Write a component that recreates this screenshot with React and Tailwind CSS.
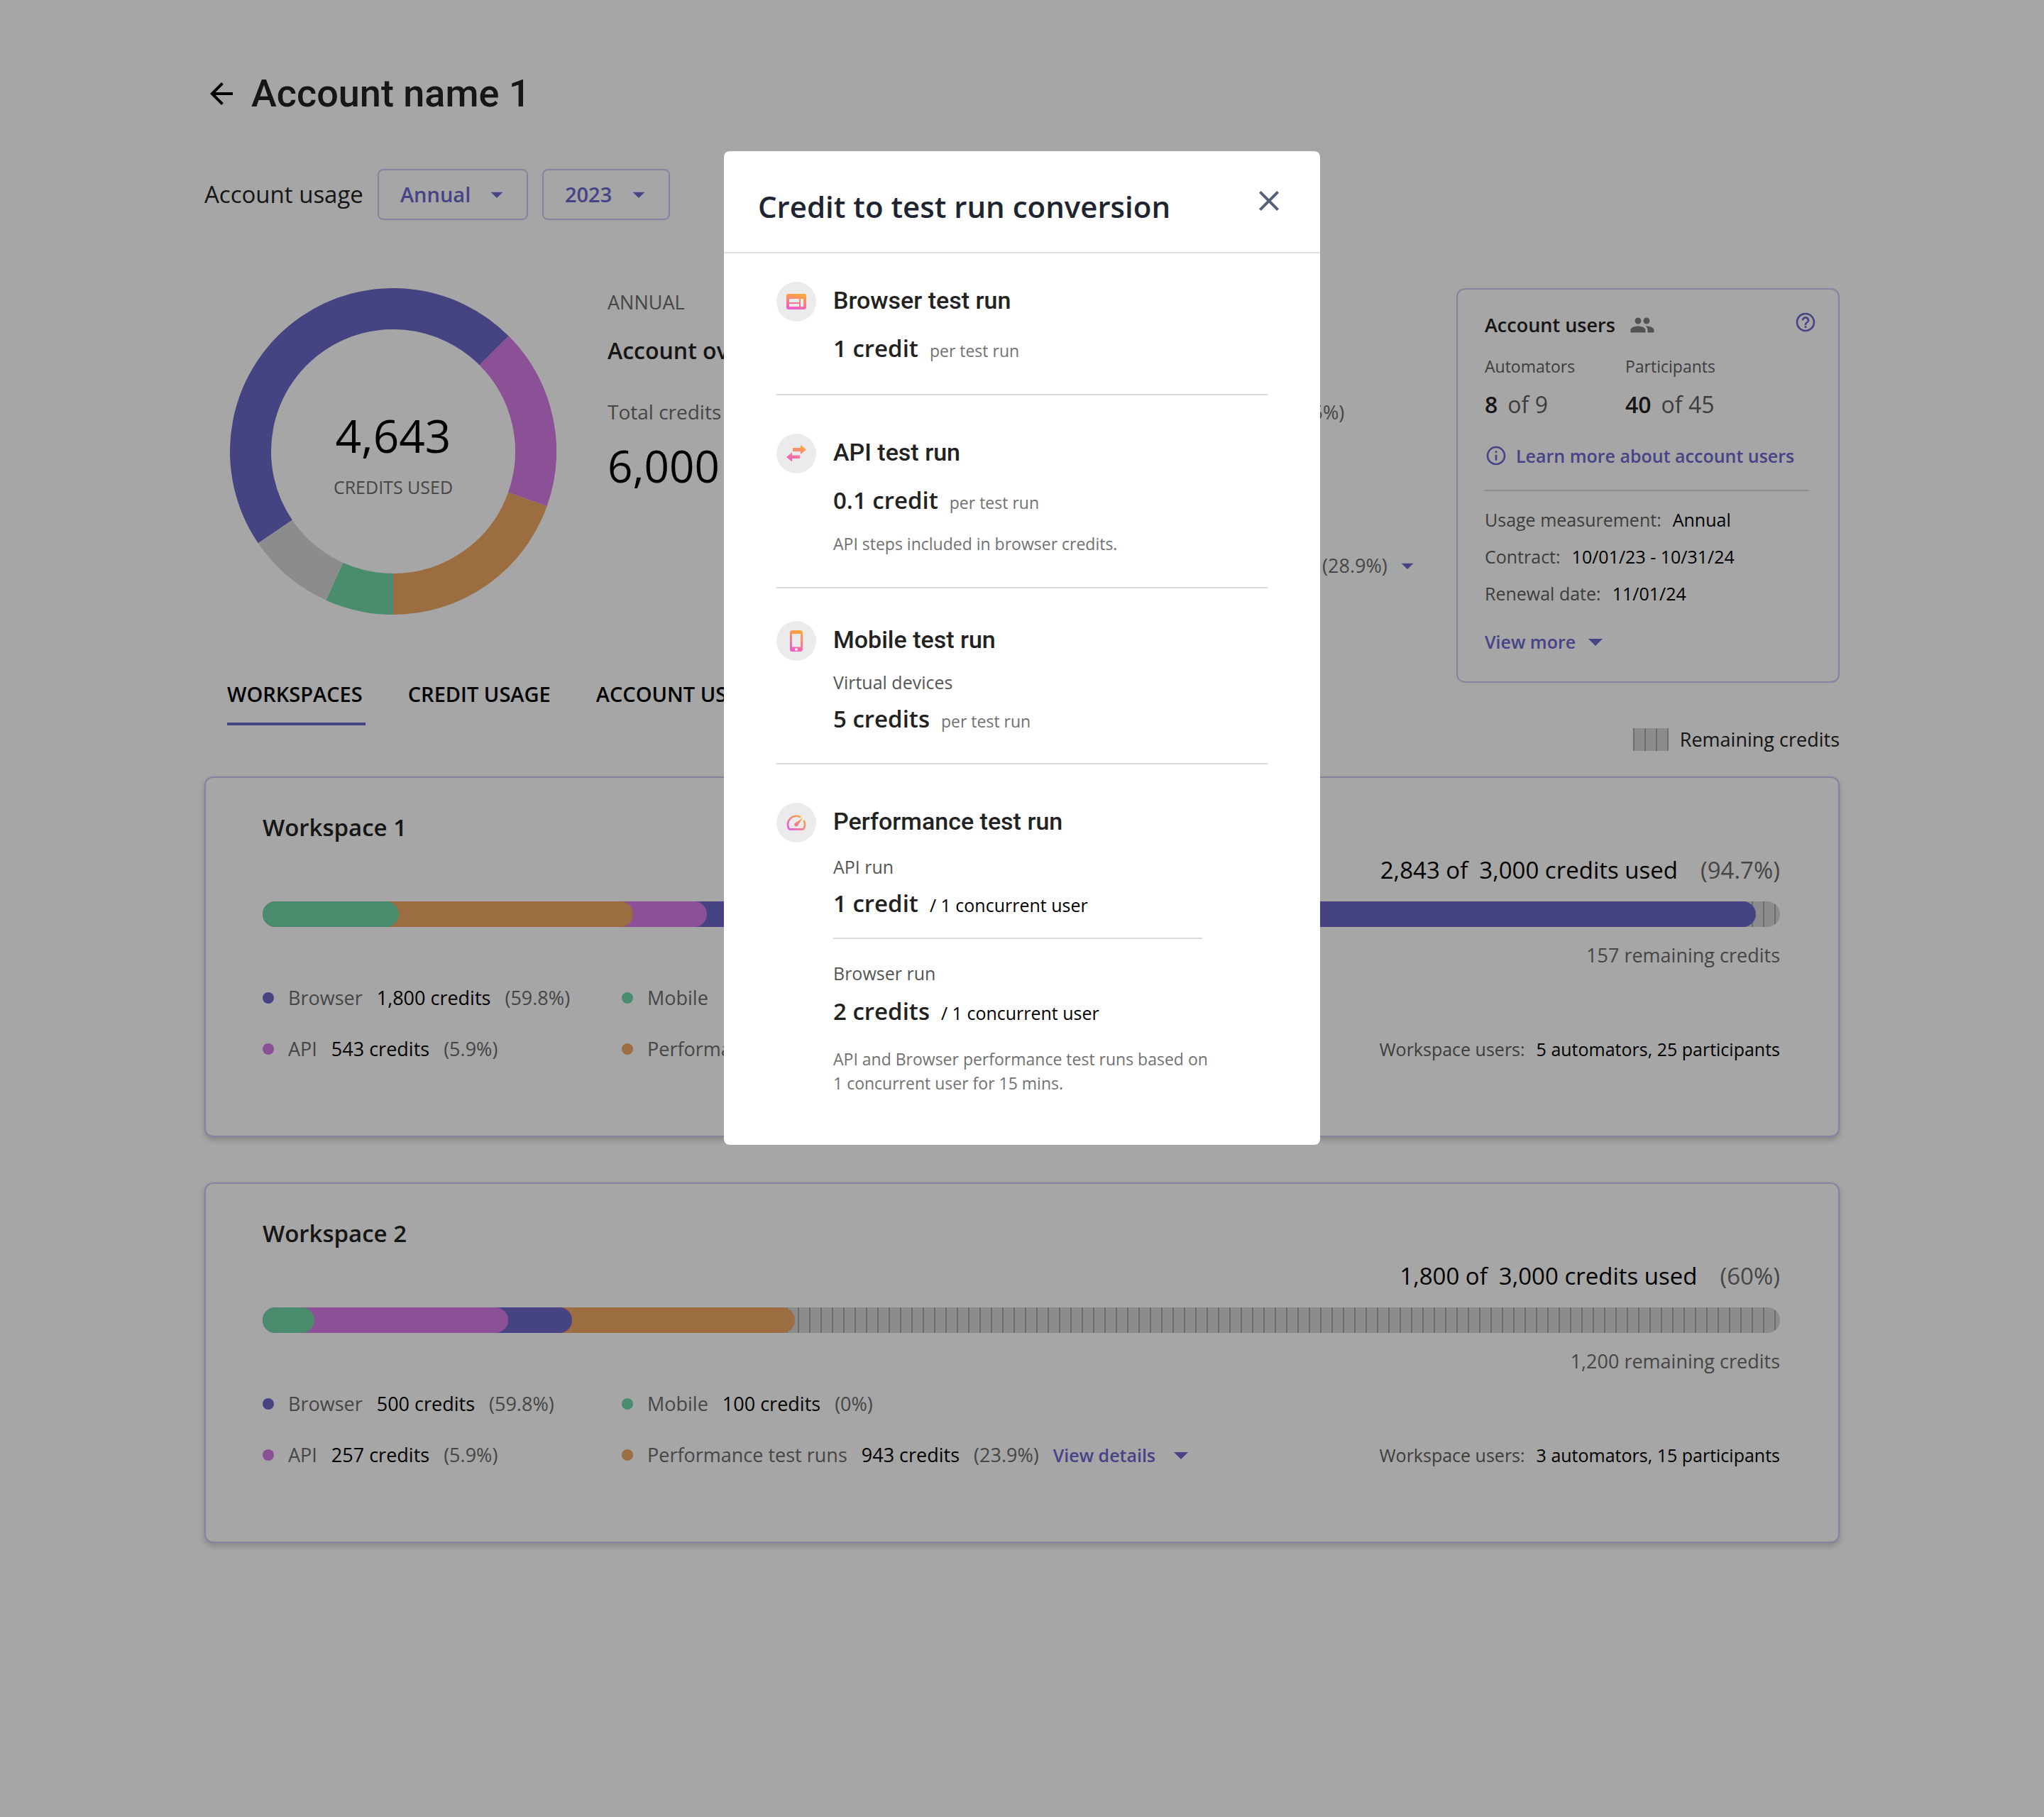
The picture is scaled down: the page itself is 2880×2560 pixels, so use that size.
import React from 'react';
import {
  MdArrowBack,
  MdArrowDropDown,
  MdClose,
  MdHelpOutline,
  MdOutlineInfo,
  MdPeople,
} from 'react-icons/md';

const STRIPES =
  'bg-[repeating-linear-gradient(to_left,#d7d7d7_0px,#d7d7d7_6px,#a9a9a9_6px,#a9a9a9_8px,#d7d7d7_8px,#d7d7d7_16px)]';

const FILL = {
  browser: 'bg-[#6c67c8]',
  api: 'bg-[#d77be7]',
  performance: 'bg-[#eea864]',
  mobile: 'bg-[#72d7a9]',
  remaining: 'bg-[#d7d7d7]',
};

const DONUT = [
  { color: '#6c67c8', from: 235.8, to: 405 },
  { color: '#d77be7', from: 45, to: 109.6 },
  { color: '#eea864', from: 109.6, to: 180 },
  { color: '#72d7a9', from: 180, to: 204.3 },
  { color: '#d7d7d7', from: 204.3, to: 235.8 },
];

const WORKSPACES = [
  {
    name: 'Workspace 1',
    used: '2,843 of',
    total: '3,000 credits used',
    percent: '(94.7%)',
    remaining: '157 remaining credits',
    users: '5 automators, 25 participants',
    segments: [
      { kind: 'browser', end: 98.4 },
      { kind: 'api', end: 29.3 },
      { kind: 'performance', end: 24.4 },
      { kind: 'mobile', end: 9 },
    ],
    browser: ['1,800 credits', '(59.8%)'],
    mobile: ['100 credits', '(0%)'],
    api: ['543 credits', '(5.9%)'],
    performance: ['943 credits', '(23.9%)'],
  },
  {
    name: 'Workspace 2',
    used: '1,800 of',
    total: '3,000 credits used',
    percent: '(60%)',
    remaining: '1,200 remaining credits',
    users: '3 automators, 15 participants',
    segments: [
      { kind: 'performance', end: 35.1 },
      { kind: 'browser', end: 20.4 },
      { kind: 'api', end: 16.2 },
      { kind: 'mobile', end: 3.4 },
    ],
    browser: ['500 credits', '(59.8%)'],
    mobile: ['100 credits', '(0%)'],
    api: ['257 credits', '(5.9%)'],
    performance: ['943 credits', '(23.9%)'],
  },
];

function Dropdown({ label, options, width }) {
  return (
    <div className={`relative ${width}`}>
      <select
        aria-label={label}
        className="h-18 w-full appearance-none rounded-lg border-2 border-[#d0caf4] bg-white pl-[30px] text-[29px] font-semibold text-[#6c67d0]"
      >
        {options.map((o) => (
          <option key={o}>{o}</option>
        ))}
      </select>
      <MdArrowDropDown
        size={40}
        className="pointer-events-none absolute top-4 right-6 text-[#6c67d0]"
      />
    </div>
  );
}

function Donut() {
  return (
    <div className="grid size-[460px] shrink-0 place-items-center">
      <svg viewBox="0 0 460 460" className="size-full [grid-area:1/1]" aria-hidden="true">
        {DONUT.map((s) => (
          <circle
            key={s.color}
            cx="230"
            cy="230"
            r="201"
            fill="none"
            stroke={s.color}
            strokeWidth="58"
            pathLength="360"
            strokeDasharray={`${s.to - s.from} 360`}
            transform={`rotate(${s.from - 90} 230 230)`}
          />
        ))}
      </svg>
      <div className="flex flex-col items-center gap-2 pt-5 [grid-area:1/1]">
        <span className="text-[64px] leading-[72px]">4,643</span>
        <span className="text-[25px] leading-[56px] text-[#6c6c6c]">CREDITS USED</span>
      </div>
    </div>
  );
}

function LegendItem({ kind, label, credits, percent, children }) {
  return (
    <li className="flex items-center gap-5 whitespace-nowrap text-[27px] leading-9">
      <span className={`size-4 rounded-full ${FILL[kind]}`} />
      <span className="text-[#6c6c6c]">{label}</span>
      <span>{credits}</span>
      <span className="text-[#6c6c6c]">{percent}</span>
      {children}
    </li>
  );
}

function LinkButton({ gap, children }) {
  return (
    <button
      type="button"
      className={`flex items-center text-[25px] leading-9 font-semibold text-[#6c67d0] ${gap}`}
    >
      {children}
      <MdArrowDropDown size={48} className="-my-2" />
    </button>
  );
}

function Fact({ label, value }) {
  return (
    <div className="flex gap-4">
      <dt className="text-[#5f5f5f]">{label}</dt>
      <dd>{value}</dd>
    </div>
  );
}

function AccountUsers() {
  return (
    <aside className="w-[540px] shrink-0 rounded-xl border-2 border-[#d0caf4] bg-white pt-8 pr-[42px] pb-[38px] pl-[38px]">
      <div className="flex items-center gap-5">
        <h2 className="text-[27px] leading-9 font-semibold text-[#222222]">Account users</h2>
        <MdPeople size={36} className="text-[#808080]" />
        <button type="button" aria-label="Help" className="-mt-2 -mr-3 ml-auto text-[#6c67d0]">
          <MdHelpOutline size={32} />
        </button>
      </div>
      <dl className="mt-6 flex">
        <div className="w-[198px]">
          <dt className="text-[23px] leading-8 text-[#5f5f5f]">Automators</dt>
          <dd className="mt-4 text-[32px] leading-11 text-[#5f5f5f]">
            <strong className="mr-3.5 font-semibold text-[#222222]">8</strong>of 9
          </dd>
        </div>
        <div>
          <dt className="text-[23px] leading-8 text-[#5f5f5f]">Participants</dt>
          <dd className="mt-4 text-[32px] leading-11 text-[#5f5f5f]">
            <strong className="mr-3.5 font-semibold text-[#222222]">40</strong>of 45
          </dd>
        </div>
      </dl>
      <a
        href="#account-users"
        className="mt-8 flex items-center gap-3 text-[25px] leading-9 font-semibold whitespace-nowrap text-[#6c67d0]"
      >
        <MdOutlineInfo size={32} />
        Learn more about account users
      </a>
      <hr className="mt-[30px] border-t-2 border-[#d7d7d7]" />
      <dl className="mt-[14px] mb-6 text-[25px] leading-[52px]">
        <Fact label="Usage measurement:" value="Annual" />
        <Fact label="Contract:" value="10/01/23 - 10/31/24" />
        <Fact label="Renewal date:" value="11/01/24" />
      </dl>
      <LinkButton gap="gap-1">View more</LinkButton>
    </aside>
  );
}

function UsageBar({ segments }) {
  return (
    <div className={`mt-[22px] grid h-9 overflow-hidden rounded-full ${STRIPES}`}>
      {segments.map((s) => (
        <div
          key={s.kind}
          className={`rounded-full [grid-area:1/1] ${FILL[s.kind]}`}
          style={{ width: `${s.end}%` }}
        />
      ))}
    </div>
  );
}

function WorkspaceCard({ data }) {
  return (
    <section className="rounded-xl border-2 border-[#d0caf4] bg-white pt-12 pr-[82px] pb-[104px] pl-20 shadow-[0_4px_8px_rgba(0,0,0,0.2)]">
      <h2 className="text-[33px] leading-11 font-semibold text-[#222222]">{data.name}</h2>
      <p className="mt-4 flex justify-end text-[33px] leading-11">
        <span className="mr-4">{data.used}</span>
        <span className="mr-8">{data.total}</span>
        <span className="text-[#6c6c6c]">{data.percent}</span>
      </p>
      <UsageBar segments={data.segments} />
      <p className="mt-[22px] text-right text-[27px] leading-9 text-[#6c6c6c]">{data.remaining}</p>
      <div className="mt-6 flex items-end justify-between">
        <ul className="grid grid-cols-[506px_auto] gap-y-9">
          <LegendItem kind="browser" label="Browser" credits={data.browser[0]} percent={data.browser[1]} />
          <LegendItem kind="mobile" label="Mobile" credits={data.mobile[0]} percent={data.mobile[1]} />
          <LegendItem kind="api" label="API" credits={data.api[0]} percent={data.api[1]} />
          <LegendItem
            kind="performance"
            label="Performance test runs"
            credits={data.performance[0]}
            percent={data.performance[1]}
          >
            <LinkButton gap="gap-3">View details</LinkButton>
          </LegendItem>
        </ul>
        <p className="flex gap-4 text-[25px] leading-9">
          <span className="text-[#5f5f5f]">Workspace users:</span>
          <span>{data.users}</span>
        </p>
      </div>
    </section>
  );
}

function WarmGradient({ id, horizontal }) {
  return (
    <linearGradient
      id={id}
      x1={horizontal ? '0' : '0.35'}
      y1={horizontal ? '0.9' : '1'}
      x2={horizontal ? '0.8' : '0.65'}
      y2={horizontal ? '0.1' : '0'}
    >
      <stop offset="0" stopColor={horizontal ? '#e552e6' : '#f05bc9'} />
      <stop offset="1" stopColor="#fea83a" />
    </linearGradient>
  );
}

function BrowserIcon() {
  return (
    <svg width="28" height="22" viewBox="0 0 28 22">
      <defs>
        <WarmGradient id="browser-fill" />
      </defs>
      <path
        fill="url(#browser-fill)"
        fillRule="evenodd"
        d="M3 0h22a3 3 0 0 1 3 3v16a3 3 0 0 1-3 3H3a3 3 0 0 1-3-3V3a3 3 0 0 1 3-3ZM4 7v5h14V7ZM4 14v4h14v-4ZM20 7v11h4V7Z"
      />
    </svg>
  );
}

function ApiIcon() {
  return (
    <svg width="28" height="24" viewBox="0 0 28 24">
      <defs>
        <WarmGradient id="api-fill" />
      </defs>
      <path
        fill="url(#api-fill)"
        d="M9 4h11V0l8 6.500L20 13V9H9ZM19 19H8v4.500L0 17l8-6.500V14.500h11Z"
      />
    </svg>
  );
}

function MobileIcon() {
  return (
    <svg width="18" height="30" viewBox="0 0 18 30">
      <defs>
        <WarmGradient id="mobile-fill" />
      </defs>
      <path
        fill="url(#mobile-fill)"
        fillRule="evenodd"
        d="M3.500 0h11A3.500 3.500 0 0 1 18 3.500v23a3.500 3.500 0 0 1-3.500 3.500h-11A3.500 3.500 0 0 1 0 26.500v-23A3.500 3.500 0 0 1 3.500 0ZM3 5v18.500h12V5ZM9 25a2 2 0 1 0 0 4a2 2 0 1 0 0-4Z"
      />
    </svg>
  );
}

function SpeedIcon() {
  return (
    <svg width="32" height="32" viewBox="0 0 24 24">
      <defs>
        <WarmGradient id="speed-fill" horizontal />
      </defs>
      <path
        fill="url(#speed-fill)"
        d="m20.380 8.570-1.230 1.850a8 8 0 0 1-.22 7.580H5.070A8 8 0 0 1 15.580 6.850l1.850-1.230A10 10 0 0 0 3.350 19a2 2 0 0 0 1.720 1h13.850a2 2 0 0 0 1.740-1 10 10 0 0 0-.27-10.440zm-9.790 6.840a2 2 0 0 0 2.830 0l5.660-8.490-8.490 5.660a2 2 0 0 0 0 2.830z"
      />
    </svg>
  );
}

function RunSection({ icon, title, className, children }) {
  return (
    <section className={`flex gap-6 ${className}`}>
      <div className="grid size-14 shrink-0 place-items-center rounded-full bg-[#ebebeb]">{icon}</div>
      <div>
        <h3 className="font-[Roboto,sans-serif] text-[34px] leading-[52px] font-medium text-[#222222]">
          {title}
        </h3>
        {children}
      </div>
    </section>
  );
}

function Price({ amount, unit, strong, className }) {
  return (
    <p className={`flex items-baseline gap-4 leading-12 ${className}`}>
      <span className="text-[33px] font-semibold text-[#222222]">{amount}</span>
      <span className={strong ? 'text-[25px] leading-8' : 'text-[23px] leading-8 text-[#717171]'}>
        {unit}
      </span>
    </p>
  );
}

function ConversionDialog() {
  return (
    <div className="fixed inset-0 flex items-start justify-center bg-black/35 pt-[213px]">
      <div
        role="dialog"
        aria-modal="true"
        aria-labelledby="conversion-title"
        className="w-full max-w-[840px] rounded-lg bg-white"
      >
        <header className="flex items-start justify-between border-b-2 border-[#e3e3e3] px-12 pt-[46px] pb-8">
          <h2 id="conversion-title" className="text-[42px] leading-16 font-semibold text-[#1e2530]">
            Credit to test run conversion
          </h2>
          <button type="button" aria-label="Close" className="text-[#53617a]">
            <MdClose size={48} />
          </button>
        </header>
        <div className="px-[74px] pt-10 pb-[70px]">
          <RunSection icon={<BrowserIcon />} title="Browser test run" className="pb-10">
            <Price amount="1 credit" unit="per test run" className="mt-[18px]" />
          </RunSection>
          <RunSection
            icon={<ApiIcon />}
            title="API test run"
            className="border-t-2 border-[#dcdcdc] pt-[54px] pb-11"
          >
            <Price amount="0.1 credit" unit="per test run" className="mt-[18px]" />
            <p className="mt-5 text-[23px] leading-[34px] text-[#717171]">
              API steps included in browser credits.
            </p>
          </RunSection>
          <RunSection
            icon={<MobileIcon />}
            title="Mobile test run"
            className="border-t-2 border-[#dcdcdc] pt-[46px] pb-[38px]"
          >
            <p className="mt-[18px] text-[25px] leading-8 text-[#555555]">Virtual devices</p>
            <Price amount="5 credits" unit="per test run" className="mt-3" />
          </RunSection>
          <RunSection
            icon={<SpeedIcon />}
            title="Performance test run"
            className="border-t-2 border-[#dcdcdc] pt-[54px]"
          >
            <p className="mt-[22px] text-[25px] leading-8 text-[#555555]">API run</p>
            <Price amount="1 credit" unit="/ 1 concurrent user" strong className="mt-3" />
            <hr className="mt-6 w-[520px] border-t-2 border-[#dcdcdc]" />
            <p className="mt-8 text-[25px] leading-8 text-[#555555]">Browser run</p>
            <Price amount="2 credits" unit="/ 1 concurrent user" strong className="mt-[14px]" />
            <p className="mt-[26px] text-[23px] leading-[34px] text-[#717171]">
              API and Browser performance test runs based on
              <br />1 concurrent user for 15 mins.
            </p>
          </RunSection>
        </div>
      </div>
    </div>
  );
}

export default function App() {
  return (
    <div className="min-h-screen bg-white font-['Open_Sans',sans-serif] text-black">
      <main className="px-[10%] pt-25 pb-24">
        <header className="flex items-center gap-[18px]">
          <button type="button" aria-label="Back">
            <MdArrowBack size={48} />
          </button>
          <h1 className="font-[Roboto,sans-serif] text-[54px] leading-16 font-medium text-[#222222]">
            Account name 1
          </h1>
        </header>

        <div className="mt-[74px] flex items-center gap-5">
          <span className="text-[33px] text-[#222222]">Account usage</span>
          <Dropdown label="Period" options={['Annual', 'Monthly']} width="w-[212px]" />
          <Dropdown label="Year" options={['2023', '2022']} width="w-[180px]" />
        </div>

        <div className="mt-24 flex">
          <div className="ml-9">
            <Donut />
          </div>
          <div className="ml-18 w-[511px] shrink-0 whitespace-nowrap">
            <p className="text-[27px] leading-10 text-[#6c6c6c]">ANNUAL</p>
            <h2 className="mt-[26px] text-[32px] leading-11 font-semibold text-[#222222]">Account overview</h2>
            <p className="mt-11 text-[28px] leading-10 text-[#6c6c6c]">Total credits purchased</p>
            <p className="mt-4 text-[62px] leading-20">6,000</p>
          </div>
          <ul className="mt-[157px] flex flex-1 flex-col gap-9">
            <LegendItem kind="remaining" label="Unspent credits" credits="1,357 credits" percent="(22.5%)" />
            <LegendItem kind="browser" label="Browser" credits="2,300 credits" percent="(38.3%)" />
            <LegendItem kind="api" label="API" credits="800 credits" percent="(13.3%)" />
            <LegendItem kind="performance" label="Performance test runs" credits="943 credits" percent="(28.9%)">
              <button type="button" aria-label="Show performance details" className="-ml-3 text-[#6c67d0]">
                <MdArrowDropDown size={40} className="-my-1" />
              </button>
            </LegendItem>
          </ul>
          <AccountUsers />
        </div>

        <div className="flex items-start justify-between">
          <div role="tablist" className="ml-8 flex gap-[60px] text-[29px] leading-8 font-semibold">
            <button type="button" role="tab" aria-selected="true" className="border-b-4 border-[#6c67c8] pr-1 pb-6">
              WORKSPACES
            </button>
            <button type="button" role="tab" aria-selected="false" className="border-b-4 border-transparent pr-1 pb-6">
              CREDIT USAGE
            </button>
            <button type="button" role="tab" aria-selected="false" className="border-b-4 border-transparent pr-1 pb-6">
              ACCOUNT USERS
            </button>
          </div>
          <div className="mt-16 flex items-center gap-4 text-[27px] leading-8 text-[#222222]">
            <span className="h-8 w-[50px] bg-[repeating-linear-gradient(to_right,#a9a9a9_0px,#a9a9a9_2px,#d7d7d7_2px,#d7d7d7_16px)]" />
            Remaining credits
          </div>
        </div>

        <div className="mt-9 flex flex-col gap-16">
          {WORKSPACES.map((w) => (
            <WorkspaceCard key={w.name} data={w} />
          ))}
        </div>
      </main>
      <ConversionDialog />
    </div>
  );
}
